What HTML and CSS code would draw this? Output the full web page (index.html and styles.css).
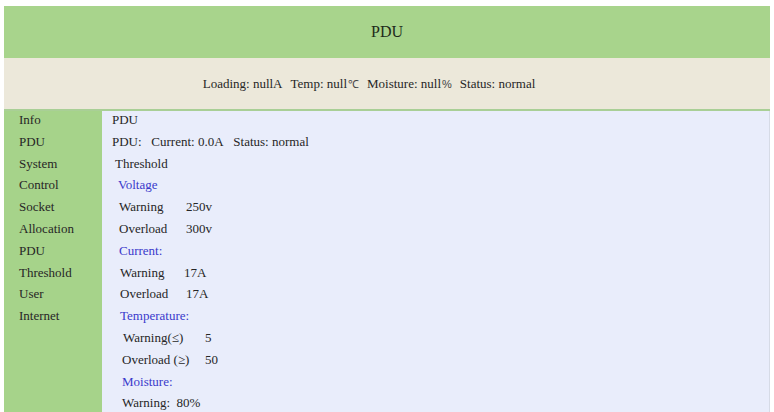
FILE: index.html
```html
<!DOCTYPE html>
<html>
<head>
<meta charset="utf-8">
<link rel="stylesheet" href="styles.css">
</head>
<body>
<div class="page">
  <header class="top">PDU</header>
  <div class="status">
    <span>Loading: nullA</span>
    <span>Temp: null<span class="unit">℃</span></span>
    <span>Moisture: null<span class="unit">%</span></span>
    <span>Status: normal</span>
  </div>
  <div class="main">
    <nav class="side">
      <div class="nav-item">Info</div>
      <div class="nav-item">PDU</div>
      <div class="nav-item">System</div>
      <div class="nav-item">Control</div>
      <div class="nav-item">Socket</div>
      <div class="nav-item">Allocation</div>
      <div class="nav-item">PDU</div>
      <div class="nav-item">Threshold</div>
      <div class="nav-item">User</div>
      <div class="nav-item">Internet</div>
    </nav>
    <section class="content">
      <div class="row">PDU</div>
      <div class="row">PDU:&nbsp;&nbsp; Current: 0.0A&nbsp;&nbsp; Status: normal</div>
      <div class="row ind1">Threshold</div>
      <div class="row ind2 head">Voltage</div>
      <div class="row ind3 kv"><span class="k k-v">Warning</span><span>250v</span></div>
      <div class="row ind3 kv"><span class="k k-v">Overload</span><span>300v</span></div>
      <div class="row ind3 head">Current:</div>
      <div class="row ind4 kv"><span class="k k-c">Warning</span><span>17A</span></div>
      <div class="row ind4 kv"><span class="k k-c2">Overload</span><span>17A</span></div>
      <div class="row ind4 head">Temperature:</div>
      <div class="row ind5 kv"><span class="k k-t">Warning(≤)</span><span>5</span></div>
      <div class="row ind6 kv"><span class="k k-t2">Overload (≥)</span><span>50</span></div>
      <div class="row ind6 head">Moisture:</div>
      <div class="row ind6">Warning:&nbsp; 80%</div>
    </section>
  </div>
</div>
</body>
</html>
```

FILE: styles.css
```css
html, body {
  margin: 0;
  padding: 0;
  background: #ffffff;
}
body {
  font-family: "Liberation Serif", "Times New Roman", serif;
  color: #262626;
  font-size: 13px;
}
.page {
  padding: 6px 4px 0 4px;
}
.top {
  height: 52px;
  background: #a8d48c;
  display: flex;
  align-items: center;
  justify-content: center;
  font-size: 16px;
  color: #1e2a1a;
}
.status {
  height: 51px;
  background: #ece8da;
  border-bottom: 2px solid #a9cf96;
  display: flex;
  align-items: center;
  justify-content: center;
  gap: 8px;
  padding-right: 36px;
  font-size: 13px;
}
.unit {
  font-family: "Liberation Sans", sans-serif;
  font-size: 11px;
  font-weight: 300;
  color: #444444;
  padding-left: 1px;
}
.main {
  display: grid;
  grid-template-columns: 98px 1fr;
  min-height: 310px;
}
.side {
  background: #a6d38a;
}
.nav-item {
  height: 21.8px;
  line-height: 18px;
  padding-left: 15px;
}
.content {
  background: #e9edfb;
  border-right: 1px solid #d6dbe6;
  padding-left: 10px;
}
.row {
  height: 21.8px;
  line-height: 18px;
}
.head {
  color: #3a3acb;
}
.ind1 { padding-left: 3px; }
.ind2 { padding-left: 6px; }
.ind3 { padding-left: 7px; }
.ind4 { padding-left: 8px; }
.ind5 { padding-left: 11px; }
.ind6 { padding-left: 10px; }
.kv {
  display: flex;
}
.k { display: inline-block; }
.k-v { width: 67px; }
.k-c { width: 64px; }
.k-c2 { width: 66px; }
.k-t { width: 82px; }
.k-t2 { width: 83px; }
```
